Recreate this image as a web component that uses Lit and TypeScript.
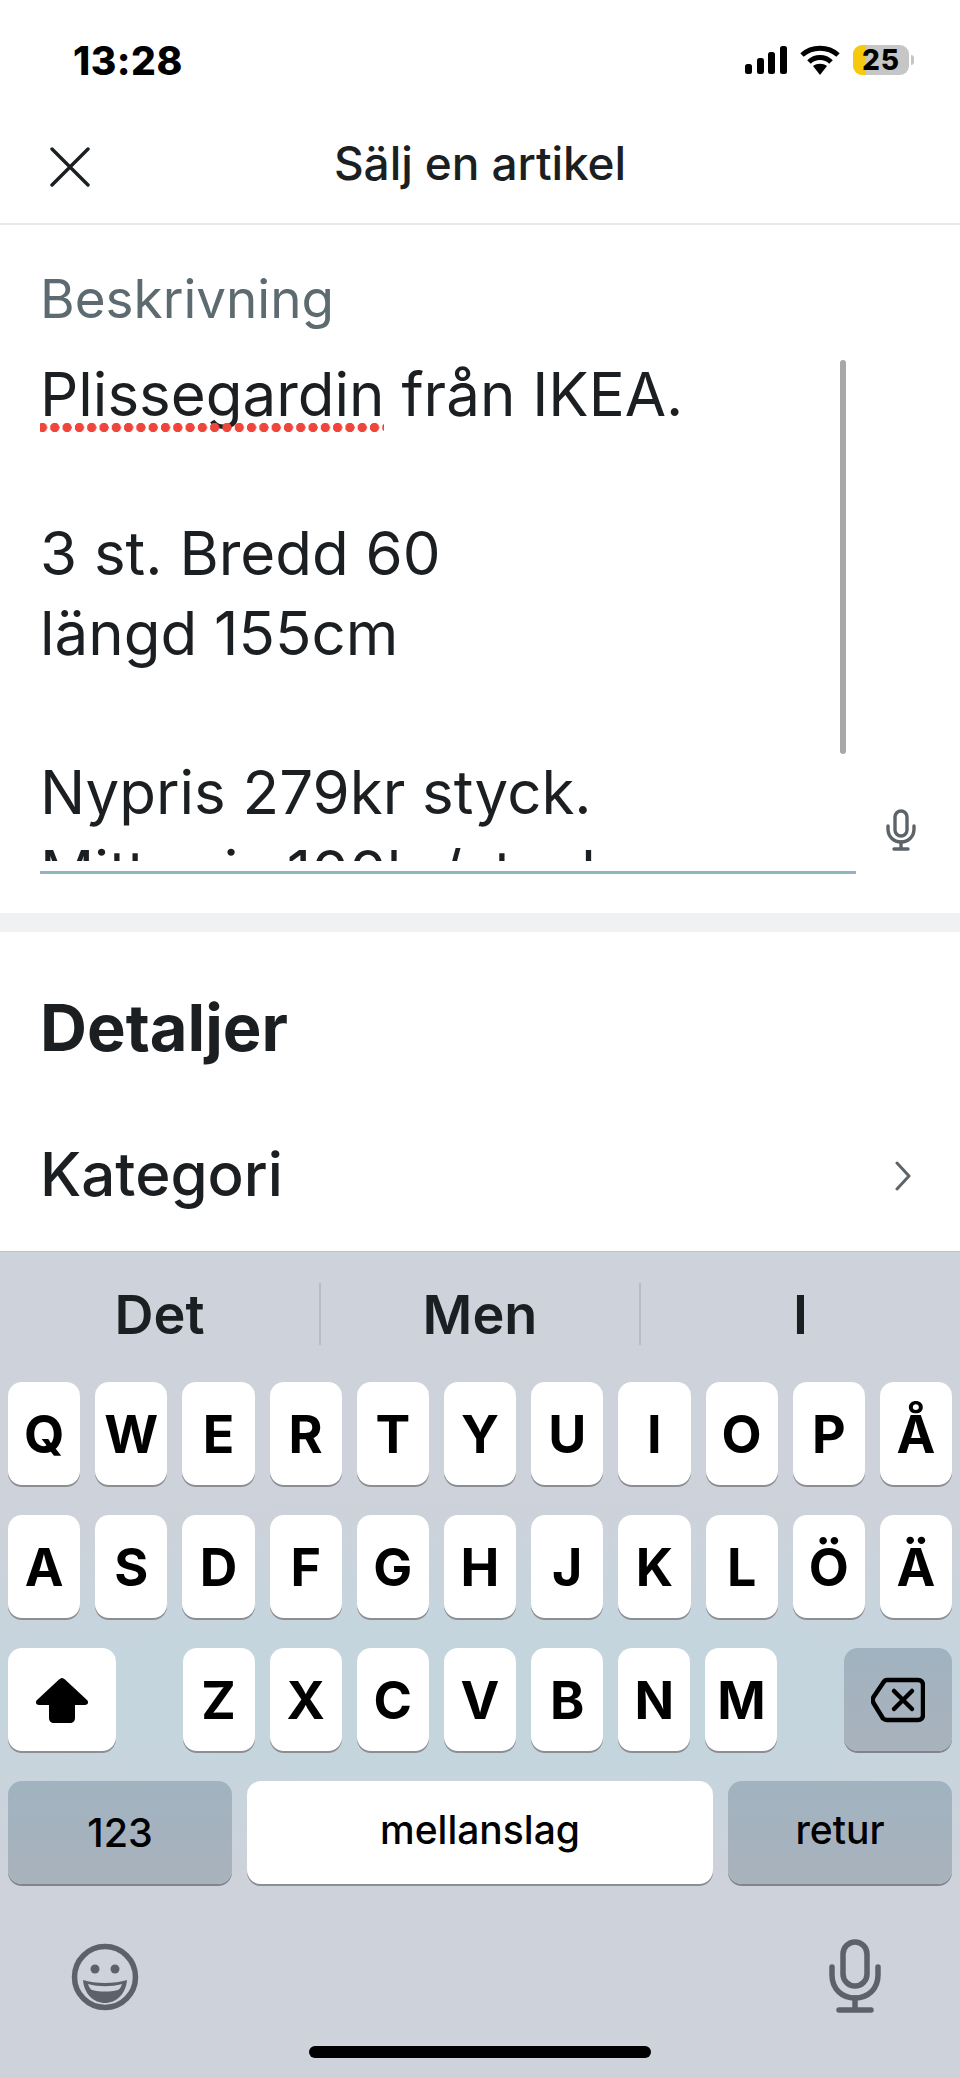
import { LitElement, html, css } from "lit";
import { customElement } from "lit/decorators.js";

const ROW1 = ["Q", "W", "E", "R", "T", "Y", "U", "I", "O", "P", "Å"];
const ROW2 = ["A", "S", "D", "F", "G", "H", "J", "K", "L", "Ö", "Ä"];
const ROW3 = ["Z", "X", "C", "V", "B", "N", "M"];

const key = (k: string) => html`<div class="key letter">${k}</div>`;

@customElement("app-root")
export class AppRoot extends LitElement {
  static styles = css`
    :host {
      display: block;
      width: 960px;
      height: 2078px;
      overflow: hidden;
      background: #fff;
      font-family: Inter, "Liberation Sans", sans-serif;
      color: #1b1f22;
    }
    .status {
      height: 110px;
      box-sizing: border-box;
      padding: 39px 51px 0 73px;
      display: flex;
      justify-content: space-between;
      align-items: flex-start;
    }
    .time {
      font-size: 39px;
      line-height: 44px;
      font-weight: 800;
      color: #000;
      letter-spacing: 0.5px;
    }
    .sys {
      display: flex;
      align-items: center;
      gap: 13px;
      padding-top: 6px;
    }
    .sys svg { display: block; }
    .battery {
      width: 56px;
      height: 30px;
      border-radius: 9px;
      background: linear-gradient(90deg, #f6c90e 0 13px, #c6c6c6 13px);
      color: #000;
      font-size: 28px;
      font-weight: 800;
      line-height: 30px;
      letter-spacing: 1px;
      text-align: center;
      position: relative;
    }
    .battery::after {
      content: "";
      position: absolute;
      right: -5px;
      top: 10px;
      width: 3px;
      height: 10px;
      border-radius: 0 3px 3px 0;
      background: #c6c6c6;
    }
    .header {
      height: 115px;
      box-sizing: border-box;
      border-bottom: 2px solid #e7e9eb;
      display: grid;
      grid-template-columns: 1fr auto 1fr;
      align-items: center;
      padding: 0 0 8px 0;
    }
    .x { margin: 8px 0 0 50px; display: block; }
    .title {
      font-size: 46px;
      line-height: 54px;
      font-weight: 500;
      letter-spacing: -0.1px;
    }
    .desc {
      height: 688px;
      box-sizing: border-box;
      display: flex;
      padding-left: 40px;
    }
    .field {
      width: 816px;
      height: 649px;
      box-sizing: border-box;
      border-bottom: 3px solid #8fb6bd;
      position: relative;
    }
    .label {
      font-size: 53px;
      line-height: 62px;
      color: #5d6b70;
      padding-top: 43px;
      height: 85px;
      box-sizing: border-box;
    }
    .scroll {
      height: 551px;
      box-sizing: border-box;
      overflow: hidden;
      font-size: 60px;
      line-height: 79.6px;
      padding-top: 45px;
      white-space: pre;
    }
    .typo { position: relative; }
    .typo::after {
      content: "";
      position: absolute;
      left: -2px;
      right: 1px;
      bottom: -2px;
      height: 9px;
      background-image: radial-gradient(circle at 4.5px 4.5px, #f0453a 4.4px, transparent 4.9px);
      background-size: 12.3px 9px;
      background-repeat: repeat-x;
    }
    .bar {
      position: absolute;
      right: 10px;
      top: 135px;
      width: 6px;
      height: 394px;
      border-radius: 3px;
      background: #a6a8aa;
    }
    .mic-s {
      margin: 584px 0 0 30px;
      display: block;
    }
    .band {
      height: 19px;
      background: #eff1f3;
    }
    .details {
      height: 319px;
      box-sizing: border-box;
      padding: 58px 40px 0 40px;
      overflow: hidden;
    }
    h2 {
      margin: 0;
      font-size: 65px;
      line-height: 76px;
      font-weight: 700;
    }
    .row {
      margin-top: 70px;
      display: flex;
      justify-content: space-between;
      align-items: center;
      font-size: 60px;
      line-height: 76px;
      font-weight: 500;
    }
    .chev { margin: 3px 9px 0 0; display: block; }
    .kbd {
      height: 827px;
      box-sizing: border-box;
      border-top: 1px solid #bfc3ca;
      background:
        radial-gradient(ellipse 1000px 190px at 50% 440px, #c5d5de 0, #c5d5de 40%, rgba(197, 213, 222, 0) 100%),
        #ced2da;
      position: relative;
    }
    .sugg {
      height: 130px;
      display: grid;
      grid-template-columns: 319px 320px 1fr;
      padding-top: 31px;
      box-sizing: border-box;
    }
    .sugg div {
      height: 62px;
      display: flex;
      align-items: center;
      justify-content: center;
      font-size: 54px;
      font-weight: 600;
      border-left: 2px solid #b8bcc4;
    }
    .sugg div:first-child { border-left: none; }
    .keys {
      display: flex;
      flex-direction: column;
      gap: 29px;
      padding: 0 8px;
    }
    .krow {
      display: flex;
      gap: 15px;
      height: 104px;
    }
    .between { justify-content: space-between; }
    .group { display: flex; gap: 15px; width: 595px; }
    .key {
      flex: 1;
      height: 103px;
      border-radius: 14px;
      background: #fff;
      box-shadow: 0 2px 0 #8b8e93;
      display: flex;
      align-items: center;
      justify-content: center;
      color: #000;
    }
    .letter {
      font-size: 52px;
      font-weight: 700;
      padding-top: 1px;
      box-sizing: border-box;
    }
    .wide { flex: none; width: 108px; }
    .fn { flex: none; width: 224px; font-size: 39.5px; font-weight: 500; }
    .dark {
      background: linear-gradient(#a1b3c0, #a9b2bd);
      box-shadow: 0 2px 0 #80858c;
    }
    .space { font-size: 39px; font-weight: 500; padding-bottom: 7px; box-sizing: border-box; }
    .bottom {
      display: flex;
      justify-content: space-between;
      align-items: flex-end;
      padding: 54px 79px 0 71px;
    }
    .bottom svg { display: block; }
    .emoji { margin-bottom: 2px; }
    .home {
      position: absolute;
      left: 309px;
      top: 794px;
      width: 342px;
      height: 12px;
      border-radius: 6px;
      background: #000;
    }
  `;

  render() {
    return html`
      <div class="status">
        <div class="time">13:28</div>
        <div class="sys">
          <svg width="42" height="28" viewBox="0 0 42 28" fill="#000">
            <rect x="0" y="18" width="7" height="10" rx="2.5"></rect>
            <rect x="12" y="12" width="7" height="16" rx="2.5"></rect>
            <rect x="23" y="6" width="7" height="22" rx="2.5"></rect>
            <rect x="35" y="0" width="7" height="28" rx="2.5"></rect>
          </svg>
          <svg width="40" height="30" viewBox="0 0 40 30" fill="none" stroke="#000" stroke-width="5">
            <path d="M2 10 C12 1 28 1 38 10"></path>
            <path d="M9 17 C15 11 25 11 31 17"></path>
            <path d="M13 21 L20 30 L27 21 C23 18 17 18 13 21 Z" fill="#000" stroke="none"></path>
          </svg>
          <div class="battery">25</div>
        </div>
      </div>

      <div class="header">
        <svg class="x" width="40" height="40" viewBox="0 0 40 40" stroke="#1b1f22" stroke-width="3.4" stroke-linecap="round">
          <path d="M2 2 L38 38 M38 2 L2 38"></path>
        </svg>
        <div class="title">Sälj en artikel</div>
        <div></div>
      </div>

      <div class="desc">
        <div class="field">
          <div class="label">Beskrivning</div>
          <div class="scroll"><span class="typo">Plissegardin</span> från IKEA.

3 st. Bredd 60
längd 155cm

Nypris 279kr styck.
Mitt pris 100kr/styck.</div>
          <div class="bar"></div>
        </div>
        <svg class="mic-s" width="30" height="42" viewBox="0 0 30 42" fill="none" stroke="#5c6469" stroke-width="3.4" stroke-linecap="round">
          <rect x="9" y="2" width="12" height="25" rx="6"></rect>
          <path d="M2 17 V20 C2 28 8 33 15 33 C22 33 28 28 28 20 V17"></path>
          <path d="M15 33 V39 M8 40 H22"></path>
        </svg>
      </div>

      <div class="band"></div>

      <div class="details">
        <h2>Detaljer</h2>
        <div class="row">
          <span>Kategori</span>
          <svg class="chev" width="16" height="30" viewBox="0 0 16 30" fill="none" stroke="#5c6469" stroke-width="3" stroke-linecap="round" stroke-linejoin="round">
            <path d="M2 2 L14 15 L2 28"></path>
          </svg>
        </div>
      </div>

      <div class="kbd">
        <div class="sugg">
          <div>Det</div>
          <div>Men</div>
          <div>I</div>
        </div>
        <div class="keys">
          <div class="krow">${ROW1.map(key)}</div>
          <div class="krow">${ROW2.map(key)}</div>
          <div class="krow between">
            <div class="key wide">
              <svg width="54" height="46" viewBox="0 0 54 46" fill="#000">
                <path d="M27 1 C28 1 29 1.500 30 2.500 L52 23 C54 25 53 28 50 28 H40 V41 C40 44 38 46 35 46 H19 C16 46 14 44 14 41 V28 H4 C1 28 0 25 2 23 L24 2.500 C25 1.500 26 1 27 1 Z"></path>
              </svg>
            </div>
            <div class="group">${ROW3.map(key)}</div>
            <div class="key wide dark">
              <svg width="54" height="46" viewBox="0 0 54 46" fill="none" stroke="#000" stroke-width="4.500" stroke-linejoin="round" stroke-linecap="round">
                <path d="M16 3 H47 C50 3 52 5 52 8 V38 C52 41 50 43 47 43 H16 C14.500 43 13.500 42.500 12 41.500 L2.500 26 C1.500 24 1.500 22 2.500 20 L12 6 C13 4 14.500 3 16 3 Z"></path>
                <path d="M23 14 L41 32 M41 14 L23 32"></path>
              </svg>
            </div>
          </div>
          <div class="krow">
            <div class="key fn dark">123</div>
            <div class="key space">mellanslag</div>
            <div class="key fn dark space">retur</div>
          </div>
        </div>
        <div class="bottom">
          <svg class="emoji" width="68" height="68" viewBox="0 0 68 68">
            <circle cx="34" cy="34" r="30.500" fill="none" stroke="#5c626c" stroke-width="5.500"></circle>
            <circle cx="24" cy="26" r="4.500" fill="#5c626c"></circle>
            <circle cx="44" cy="26" r="4.500" fill="#5c626c"></circle>
            <path d="M12 37 C24 41 44 41 56 37 C55 51 45 60 34 60 C23 60 13 51 12 37 Z" fill="#5c626c"></path>
            <path d="M17 41 C28 44 40 44 51 41 C50 44 49 46 47 47 C38 49 30 49 21 47 C19 46 18 44 17 41 Z" fill="#ced2da"></path>
          </svg>
          <svg width="52" height="74" viewBox="0 0 52 74" fill="none" stroke="#5c626c" stroke-width="5.500" stroke-linecap="round">
            <rect x="14" y="3" width="24" height="44" rx="12"></rect>
            <path d="M3 28 V36 C3 50 13 59 26 59 C39 59 49 50 49 36 V28"></path>
            <path d="M26 59 V70 M10 71 H42"></path>
          </svg>
        </div>
        <div class="home"></div>
      </div>
    `;
  }
}
